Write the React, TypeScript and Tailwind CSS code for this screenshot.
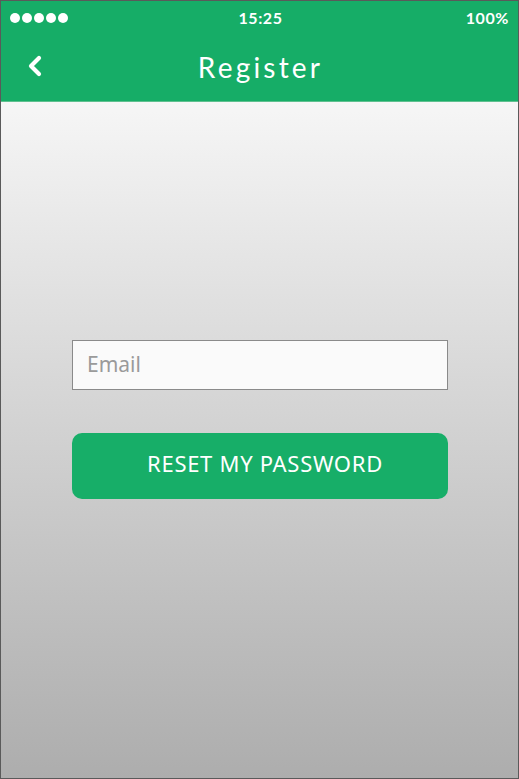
export default function App() {
  return (
    <div className="w-[519px] h-[779px] border border-[#5a5a5a] flex flex-col overflow-hidden font-['Noto_Sans',sans-serif]">
      <header className="bg-[#16ad67] h-[101px] flex flex-col shrink-0 border-b border-[#5fc08f]">
        <div className="h-[34px] px-[9px] flex items-center justify-between text-white font-['Lato',sans-serif] font-bold text-[16px] tracking-[0.6px]">
          <div className="flex items-center gap-[2px] w-[70px]">
            {[0, 1, 2, 3, 4].map((i) => (
              <span key={i} className="w-[10px] h-[10px] rounded-full bg-white" />
            ))}
          </div>
          <span className="-mt-[1px] ml-[2px]">15:25</span>
          <span className="w-[70px] text-right -mt-[1px]">100%</span>
        </div>
        <div className="relative flex-1 flex items-center justify-center">
          <button className="absolute left-[25px] top-[20px] text-white">
            <svg width="18" height="22" viewBox="0 0 18 22" fill="none">
              <path d="M13 3 L5 11 L13 19" stroke="white" strokeWidth="4.2" strokeLinecap="round" strokeLinejoin="round" />
            </svg>
          </button>
          <h1 className="text-white font-['Lato',sans-serif] text-[28px] tracking-[3.2px] -mt-[2px] ml-[2px]">Register</h1>
        </div>
      </header>
      <main className="flex-1 bg-gradient-to-b from-[#f6f6f6] to-[#adadad] flex flex-col pt-[238px] pl-[71px] pr-[70px]">
        <div className="h-[50px] bg-[#fafafa] border border-[#8a8a8a] flex items-center px-[14px]">
          <input
            placeholder="Email"
            className="w-full bg-transparent outline-none text-[21px] text-[#555] placeholder:text-[#9a9a9a]"
          />
        </div>
        <button className="mt-[43px] h-[66px] rounded-[10px] bg-[#17ae68] text-white text-[22px] tracking-[0.7px] flex items-center justify-center pb-[5px] pl-[10px]">
          RESET MY PASSWORD
        </button>
      </main>
    </div>
  )
}
